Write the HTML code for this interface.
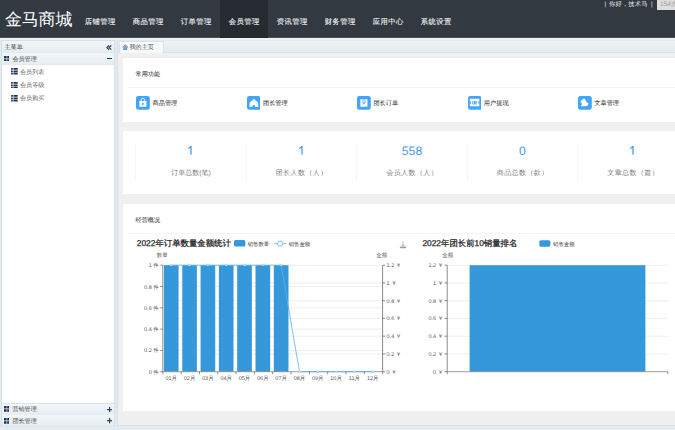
<!DOCTYPE html>
<html><head><meta charset="utf-8">
<style>
*{margin:0;padding:0;box-sizing:border-box}
html,body{width:675px;height:430px;overflow:hidden}
body{position:relative;background:#e4ecef;font-family:"Liberation Sans",sans-serif;color:#333;text-rendering:geometricPrecision}
.a{position:absolute;white-space:nowrap}
#hd{left:0;top:0;width:675px;height:38px;background:#323941;box-shadow:inset 0 -1px 0 #4a5058}
#logo{left:5px;top:7.2px;font-size:17px;line-height:26px;color:#fff;letter-spacing:-0.2px}
.mi{top:0;height:38px;width:48px;text-align:center;font-size:7.3px;line-height:43.5px;color:#f2f2f2;letter-spacing:0.45px;text-indent:0.45px;-webkit-text-stroke:0.12px #f2f2f2}
.mi.on{background:#262a31}
.tr{top:0;font-size:6.3px;line-height:10px;color:#eee;letter-spacing:0.15px}
#trbox{left:656.8px;top:0;width:19px;height:9.8px;background:#dedede;font-size:6.6px;line-height:9.6px;color:#9a9a9a;padding-left:3.2px;overflow:hidden}
/* sidebar */
#sb{left:1px;top:40px;width:114px;height:387px;background:#fff;border:1px solid #d4e0e6}
.sbh{left:0;width:112px;height:11.5px;background:linear-gradient(#f2f6f8,#e6edf0);border-bottom:1px solid #dfe8ec;font-size:6.1px;line-height:13.8px;color:#4a4a4a}
.sbi{left:0;width:112px;height:13.4px;font-size:6.1px;line-height:14.6px;color:#666;padding-left:18px}
.g4{position:absolute;left:1.7px;top:2.7px;width:5.8px;height:5.8px}
.li{position:absolute;left:9px;top:2.9px;width:6.8px;height:6.6px}
.dbl{left:104px;top:-1px;font-size:10px;font-weight:bold;color:#1f3557;line-height:11px}
.minus{left:104.7px;top:5px;width:5px;height:1.2px;background:#1f3557}
.plus{left:105px;top:0;font-size:8px;font-weight:bold;color:#1f3557;line-height:11px}
/* main */
#mp{left:117px;top:40px;width:560px;height:386px;background:#f0f0f0;border:1px solid #d4e0e6;border-top-color:#e3eaee}
#hl{left:0;top:38px;width:675px;height:2px;background:#edf2f4}
#tabbar{left:0;top:0;width:560px;height:12px;background:linear-gradient(#eef3f5,#e3ebee);border-bottom:1px solid #d6e1e6}
#tab{left:0.5px;top:-0.5px;width:45px;height:12px;background:linear-gradient(#fdfefe,#f4f8fa);border:1px solid #d9e3e8;border-bottom:none;font-size:6.1px;line-height:12px;color:#555;padding-left:10px}
.card{left:5px;width:570px;background:#fff}
.t65{font-size:6.1px;color:#222;line-height:8px}
.qi{width:14px;height:14px;border-radius:2.5px;background:#3d9ff5}
.ql{font-size:6.2px;line-height:15.6px;color:#222}
.num{font-size:12.2px;color:#4a9af2;text-align:center;width:110px}
.lab{font-size:7px;color:#808080;text-align:center;width:110px}
.cell{top:12.5px;width:0;height:37px;border-left:1px dotted #efefef}
svg text{font-family:"Liberation Sans",sans-serif;text-rendering:geometricPrecision}
.ax{font-size:5.5px;fill:#5a5a5a}
.tt{font-size:8.4px;font-weight:normal;fill:#222;stroke:#222;stroke-width:0.25px}
.lg{font-size:5.4px;fill:#484848}
</style></head><body>
<div id="hd" class="a">
  <div id="logo" class="a">金马商城</div>
  <div class="a mi" style="left:76px">店铺管理</div>
  <div class="a mi" style="left:124px">商品管理</div>
  <div class="a mi" style="left:172px">订单管理</div>
  <div class="a mi on" style="left:220px">会员管理</div>
  <div class="a mi" style="left:268px">资讯管理</div>
  <div class="a mi" style="left:316px">财务管理</div>
  <div class="a mi" style="left:364px">应用中心</div>
  <div class="a mi" style="left:412px">系统设置</div>
  <div class="a tr" style="left:604.5px">|</div><div class="a tr" style="left:609px">你好，技术马</div><div class="a tr" style="left:651px">|</div>
  <div id="trbox" class="a">154次</div>
</div>

<div id="hl" class="a"></div>
<div id="sb" class="a">
  <div class="a sbh" style="top:0;padding-left:2.5px">主菜单<svg class="a" style="left:104px;top:3.5px" width="6" height="5.2" viewBox="0 0 6 5.2"><path d="M2.9 0.5L0.9 2.6l2 2.1M5.2 0.5L3.2 2.6l2 2.1" fill="none" stroke="#1f3557" stroke-width="1.15"/></svg></div>
  <div class="a sbh" style="top:12px;padding-left:10.4px"><svg class="g4" viewBox="0 0 6 6"><path d="M0 0h2.7v2.7H0zM3.3 0H6v2.7H3.3zM0 3.3h2.7V6H0zM3.3 3.3H6V6H3.3z" fill="#1f3557"/></svg>会员管理<span class="a minus"></span></div>
  <div class="a sbi" style="top:24.5px"><svg class="li" viewBox="0 0 7 7"><path d="M0 0h1.8v1.9H0zM2.5 0H7v1.9H2.5zM0 2.55h1.8v1.9H0zM2.5 2.55H7v1.9H2.5zM0 5.1h1.8V7H0zM2.5 5.1H7V7H2.5z" fill="#1f3557"/></svg>会员列表</div>
  <div class="a sbi" style="top:37.9px"><svg class="li" viewBox="0 0 7 7"><path d="M0 0h1.8v1.9H0zM2.5 0H7v1.9H2.5zM0 2.55h1.8v1.9H0zM2.5 2.55H7v1.9H2.5zM0 5.1h1.8V7H0zM2.5 5.1H7V7H2.5z" fill="#1f3557"/></svg>会员等级</div>
  <div class="a sbi" style="top:51.2px"><svg class="li" viewBox="0 0 7 7"><path d="M0 0h1.8v1.9H0zM2.5 0H7v1.9H2.5zM0 2.55h1.8v1.9H0zM2.5 2.55H7v1.9H2.5zM0 5.1h1.8V7H0zM2.5 5.1H7V7H2.5z" fill="#1f3557"/></svg>会员购买</div>
  <div class="a sbh" style="top:362.4px;padding-left:10.4px;border-top:1px solid #d8e4e8;height:12.7px;line-height:12px"><svg class="g4" style="top:1.8px" viewBox="0 0 6 6"><path d="M0 0h2.7v2.7H0zM3.3 0H6v2.7H3.3zM0 3.3h2.7V6H0zM3.3 3.3H6V6H3.3z" fill="#1f3557"/></svg>营销管理<svg class="a" style="left:104.6px;top:2.3px" width="5.2" height="5.2" viewBox="0 0 5.2 5.2"><path d="M2.6 0v5.2M0 2.6h5.2" stroke="#34465f" stroke-width="1.3"/></svg></div>
  <div class="a sbh" style="top:374.1px;padding-left:10.4px"><svg class="g4" viewBox="0 0 6 6"><path d="M0 0h2.7v2.7H0zM3.3 0H6v2.7H3.3zM0 3.3h2.7V6H0zM3.3 3.3H6V6H3.3z" fill="#1f3557"/></svg>团长管理<svg class="a" style="left:104.6px;top:3.3px" width="5.2" height="5.2" viewBox="0 0 5.2 5.2"><path d="M2.6 0v5.2M0 2.6h5.2" stroke="#34465f" stroke-width="1.3"/></svg></div>
</div>

<div id="mp" class="a">
  <div id="tabbar" class="a"></div>
  <div id="tab" class="a"><svg class="a" style="left:2.6px;top:2px" width="6.5" height="6.2" viewBox="0 0 13 12.4"><path d="M6.5 0.5L0.5 6.2l1.3 1.2L6.5 3l4.7 4.4 1.3-1.2z" fill="#b9707c"/><path d="M2.5 7.3L6.5 3.6l4 3.7V12h-8z" fill="#5fa0e8"/></svg>我的主页</div>
  <!-- card 1 -->
  <div class="a card" style="top:17px;height:64px">
    <div class="a t65" style="left:12.6px;top:13px">常用功能</div>
    <div class="a" style="left:4px;top:29px;width:566px;height:1px;background:#f4f5f6"></div>
    <svg class="a" style="left:13.20px;top:38.3px" width="13.8" height="13.8" viewBox="0 0 14 14"><rect width="14" height="14" rx="2.3" fill="#41a5fb"/><path d="M5.2 5V4.2a1.8 1.8 0 0 1 3.6 0V5" fill="none" stroke="#fff" stroke-width="0.9"/><rect x="3.4" y="5" width="7.2" height="5.9" rx="0.4" fill="#fff"/><path d="M7 6.6v2.8M5.6 8h2.8" stroke="#41a5fb" stroke-width="0.9"/></svg><div class="a ql" style="left:29.50px;top:38.3px">商品管理</div>
    <svg class="a" style="left:123.65px;top:38.3px" width="13.8" height="13.8" viewBox="0 0 14 14"><rect width="14" height="14" rx="2.3" fill="#41a5fb"/><path d="M7 2.8l4.4 4v4.3H2.6V6.8z" fill="#fff"/><path d="M5.6 11.1a1.4 1.4 0 0 1 2.8 0z" fill="#41a5fb"/><circle cx="7" cy="10.3" r="1.2" fill="#41a5fb"/></svg><div class="a ql" style="left:139.95px;top:38.3px">团长管理</div>
    <svg class="a" style="left:234.10px;top:38.3px" width="13.8" height="13.8" viewBox="0 0 14 14"><rect width="14" height="14" rx="2.3" fill="#41a5fb"/><rect x="3.4" y="3.3" width="7.2" height="7.6" rx="0.3" fill="#fff"/><path d="M5.4 4.1h3.2M4.8 6.2h4.4M5.6 8.2l2.8-1.3" stroke="#41a5fb" stroke-width="0.9"/></svg><div class="a ql" style="left:250.40px;top:38.3px">团长订单</div>
    <svg class="a" style="left:344.55px;top:38.3px" width="13.8" height="13.8" viewBox="0 0 14 14"><rect width="14" height="14" rx="2.3" fill="#41a5fb"/><rect x="1.9" y="2.8" width="9.6" height="7.6" fill="#fff"/><path d="M1.9 5.4a1.3 1.3 0 0 1 0 2.6zM11.5 5.4a1.3 1.3 0 0 0 0 2.6z" fill="#41a5fb"/><path d="M4.3 5.1h4.9v3.4H4.3z" fill="#41a5fb"/><path d="M5.4 5.1v3.4M8.1 5.1v3.4" stroke="#fff" stroke-width="0.7"/></svg><div class="a ql" style="left:360.85px;top:38.3px">用户提现</div>
    <svg class="a" style="left:455.00px;top:38.3px" width="13.8" height="13.8" viewBox="0 0 14 14"><rect width="14" height="14" rx="2.3" fill="#41a5fb"/><path d="M2.7 5.6C2.7 4.7 3.4 4.2 4.2 4.2 4.5 3.3 5.2 2.7 6 2.7c0.9 0 1.6 0.7 1.7 1.6l0.5 1.3 2.4 1.9c0 1.4-1.3 2.8-3.2 2.8H2.9c0-0.9 0.5-1.5 1.2-1.7L3.6 7.4C3 7 2.7 6.3 2.7 5.6z" fill="#fff"/></svg><div class="a ql" style="left:471.30px;top:38.3px">文章管理</div>
  </div>
  <!-- card 2 -->
  <div class="a card" style="top:90px;height:63px">
    <div class="a cell" style="left:12.2px"></div>
    <div class="a cell" style="left:122.7px"></div>
    <div class="a cell" style="left:233.1px"></div>
    <div class="a cell" style="left:343.6px"></div>
    <div class="a cell" style="left:454px"></div>
    <svg class="a" style="left:calc(65.5px - 0.4px);top:14px" width="5" height="11" viewBox="0 0 5 11"><path d="M2.35 1h1.3v8.8h-1.3V2.7L0.3 4.2 0 3.2z" fill="#4a9af2"/></svg><div class="a lab" style="left:13px;top:37.5px">订单总数(笔)</div>
    <svg class="a" style="left:calc(176.1px - 0.4px);top:14px" width="5" height="11" viewBox="0 0 5 11"><path d="M2.35 1h1.3v8.8h-1.3V2.7L0.3 4.2 0 3.2z" fill="#4a9af2"/></svg><div class="a lab" style="left:123.5px;top:38px;letter-spacing:0.4px;text-indent:0.4px">团长人数（人）</div>
    <div class="a num" style="left:234px;top:13.4px">558</div><div class="a lab" style="left:234px;top:38px;letter-spacing:0.4px;text-indent:0.4px">会员人数（人）</div>
    <div class="a num" style="left:344.5px;top:13.4px">0</div><div class="a lab" style="left:344.5px;top:38px;letter-spacing:0.4px;text-indent:0.4px">商品总数（款）</div>
    <svg class="a" style="left:calc(507.5px - 0.4px);top:14px" width="5" height="11" viewBox="0 0 5 11"><path d="M2.35 1h1.3v8.8h-1.3V2.7L0.3 4.2 0 3.2z" fill="#4a9af2"/></svg><div class="a lab" style="left:455px;top:38px;letter-spacing:0.4px;text-indent:0.4px">文章总数（篇）</div>
  </div>
  <!-- card 3 -->
  <div class="a card" style="top:163px;height:207px">
    <div class="a t65" style="left:12.6px;top:13px">经营概况</div>
    <div class="a" style="left:4px;top:28.6px;width:566px;height:1px;background:#f4f5f6"></div>
  </div>
</div>
<!--CHART--><svg class="a" style="left:0;top:0" width="675" height="430" viewBox="0 0 675 430">
<line x1="162.8" y1="286.5" x2="382.6" y2="286.5" stroke="#e2e2e2" stroke-width="0.6"/>
<line x1="162.8" y1="307.8" x2="382.6" y2="307.8" stroke="#e2e2e2" stroke-width="0.6"/>
<line x1="162.8" y1="329.1" x2="382.6" y2="329.1" stroke="#e2e2e2" stroke-width="0.6"/>
<line x1="162.8" y1="350.4" x2="382.6" y2="350.4" stroke="#e2e2e2" stroke-width="0.6"/>
<line x1="162.8" y1="265.2" x2="382.6" y2="265.2" stroke="#e2e2e2" stroke-width="0.6"/>
<line x1="162.8" y1="282.95" x2="382.6" y2="282.95" stroke="#e2e2e2" stroke-width="0.6"/>
<line x1="162.8" y1="300.7" x2="382.6" y2="300.7" stroke="#e2e2e2" stroke-width="0.6"/>
<line x1="162.8" y1="318.45" x2="382.6" y2="318.45" stroke="#e2e2e2" stroke-width="0.6"/>
<line x1="162.8" y1="336.2" x2="382.6" y2="336.2" stroke="#e2e2e2" stroke-width="0.6"/>
<line x1="162.8" y1="353.95" x2="382.6" y2="353.95" stroke="#e2e2e2" stroke-width="0.6"/>
<rect x="163.93" y="265.2" width="14.65" height="106.5" fill="#3498db"/>
<rect x="182.25" y="265.2" width="14.65" height="106.5" fill="#3498db"/>
<rect x="200.57" y="265.2" width="14.65" height="106.5" fill="#3498db"/>
<rect x="218.88" y="265.2" width="14.65" height="106.5" fill="#3498db"/>
<rect x="237.2" y="265.2" width="14.65" height="106.5" fill="#3498db"/>
<rect x="255.51" y="265.2" width="14.65" height="106.5" fill="#3498db"/>
<rect x="273.83" y="265.2" width="14.65" height="106.5" fill="#3498db"/>
<line x1="162.8" y1="265.2" x2="162.8" y2="371.7" stroke="#666" stroke-width="0.75"/>
<line x1="382.6" y1="265.2" x2="382.6" y2="371.7" stroke="#666" stroke-width="0.75"/>
<line x1="162.8" y1="371.7" x2="382.6" y2="371.7" stroke="#8a8a8a" stroke-width="0.85"/>
<line x1="160.3" y1="371.7" x2="162.8" y2="371.7" stroke="#666" stroke-width="0.75"/>
<text x="158.8" y="373.7" text-anchor="end" class="ax">0 件</text>
<line x1="160.3" y1="350.4" x2="162.8" y2="350.4" stroke="#666" stroke-width="0.75"/>
<text x="158.8" y="352.4" text-anchor="end" class="ax">0.2 件</text>
<line x1="160.3" y1="329.1" x2="162.8" y2="329.1" stroke="#666" stroke-width="0.75"/>
<text x="158.8" y="331.1" text-anchor="end" class="ax">0.4 件</text>
<line x1="160.3" y1="307.8" x2="162.8" y2="307.8" stroke="#666" stroke-width="0.75"/>
<text x="158.8" y="309.8" text-anchor="end" class="ax">0.6 件</text>
<line x1="160.3" y1="286.5" x2="162.8" y2="286.5" stroke="#666" stroke-width="0.75"/>
<text x="158.8" y="288.5" text-anchor="end" class="ax">0.8 件</text>
<line x1="160.3" y1="265.2" x2="162.8" y2="265.2" stroke="#666" stroke-width="0.75"/>
<text x="158.8" y="267.2" text-anchor="end" class="ax">1 件</text>
<line x1="382.6" y1="371.7" x2="385.1" y2="371.7" stroke="#666" stroke-width="0.75"/>
<text x="386.6" y="373.7" class="ax">0 ￥</text>
<line x1="382.6" y1="353.95" x2="385.1" y2="353.95" stroke="#666" stroke-width="0.75"/>
<text x="386.6" y="355.95" class="ax">0.2 ￥</text>
<line x1="382.6" y1="336.2" x2="385.1" y2="336.2" stroke="#666" stroke-width="0.75"/>
<text x="386.6" y="338.2" class="ax">0.4 ￥</text>
<line x1="382.6" y1="318.45" x2="385.1" y2="318.45" stroke="#666" stroke-width="0.75"/>
<text x="386.6" y="320.45" class="ax">0.6 ￥</text>
<line x1="382.6" y1="300.7" x2="385.1" y2="300.7" stroke="#666" stroke-width="0.75"/>
<text x="386.6" y="302.7" class="ax">0.8 ￥</text>
<line x1="382.6" y1="282.95" x2="385.1" y2="282.95" stroke="#666" stroke-width="0.75"/>
<text x="386.6" y="284.95" class="ax">1 ￥</text>
<line x1="382.6" y1="265.2" x2="385.1" y2="265.2" stroke="#666" stroke-width="0.75"/>
<text x="386.6" y="267.2" class="ax">1.2 ￥</text>
<line x1="162.8" y1="371.7" x2="162.8" y2="374.2" stroke="#666" stroke-width="0.75"/>
<line x1="181.12" y1="371.7" x2="181.12" y2="374.2" stroke="#666" stroke-width="0.75"/>
<line x1="199.43" y1="371.7" x2="199.43" y2="374.2" stroke="#666" stroke-width="0.75"/>
<line x1="217.75" y1="371.7" x2="217.75" y2="374.2" stroke="#666" stroke-width="0.75"/>
<line x1="236.07" y1="371.7" x2="236.07" y2="374.2" stroke="#666" stroke-width="0.75"/>
<line x1="254.38" y1="371.7" x2="254.38" y2="374.2" stroke="#666" stroke-width="0.75"/>
<line x1="272.7" y1="371.7" x2="272.7" y2="374.2" stroke="#666" stroke-width="0.75"/>
<line x1="291.02" y1="371.7" x2="291.02" y2="374.2" stroke="#666" stroke-width="0.75"/>
<line x1="309.33" y1="371.7" x2="309.33" y2="374.2" stroke="#666" stroke-width="0.75"/>
<line x1="327.65" y1="371.7" x2="327.65" y2="374.2" stroke="#666" stroke-width="0.75"/>
<line x1="345.97" y1="371.7" x2="345.97" y2="374.2" stroke="#666" stroke-width="0.75"/>
<line x1="364.28" y1="371.7" x2="364.28" y2="374.2" stroke="#666" stroke-width="0.75"/>
<line x1="382.6" y1="371.7" x2="382.6" y2="374.2" stroke="#666" stroke-width="0.75"/>
<text x="171.26" y="379.5" text-anchor="middle" class="ax">01月</text>
<text x="189.58" y="379.5" text-anchor="middle" class="ax">02月</text>
<text x="207.89" y="379.5" text-anchor="middle" class="ax">03月</text>
<text x="226.21" y="379.5" text-anchor="middle" class="ax">04月</text>
<text x="244.53" y="379.5" text-anchor="middle" class="ax">05月</text>
<text x="262.84" y="379.5" text-anchor="middle" class="ax">06月</text>
<text x="281.16" y="379.5" text-anchor="middle" class="ax">07月</text>
<text x="299.48" y="379.5" text-anchor="middle" class="ax">08月</text>
<text x="317.79" y="379.5" text-anchor="middle" class="ax">09月</text>
<text x="336.11" y="379.5" text-anchor="middle" class="ax">10月</text>
<text x="354.43" y="379.5" text-anchor="middle" class="ax">11月</text>
<text x="372.74" y="379.5" text-anchor="middle" class="ax">12月</text>
<polyline points="171.26,265.2 189.58,265.2 207.89,265.2 226.21,265.2 244.53,265.2 262.84,265.2 281.16,265.2 299.48,371.7 317.79,371.7 336.11,371.7 354.43,371.7 372.74,371.7" fill="none" stroke="#5ab1ef" stroke-width="0.8"/>
<circle cx="171.26" cy="265.2" r="0.9" fill="#fff" stroke="#5ab1ef" stroke-width="0.45"/>
<circle cx="189.58" cy="265.2" r="0.9" fill="#fff" stroke="#5ab1ef" stroke-width="0.45"/>
<circle cx="207.89" cy="265.2" r="0.9" fill="#fff" stroke="#5ab1ef" stroke-width="0.45"/>
<circle cx="226.21" cy="265.2" r="0.9" fill="#fff" stroke="#5ab1ef" stroke-width="0.45"/>
<circle cx="244.53" cy="265.2" r="0.9" fill="#fff" stroke="#5ab1ef" stroke-width="0.45"/>
<circle cx="262.84" cy="265.2" r="0.9" fill="#fff" stroke="#5ab1ef" stroke-width="0.45"/>
<circle cx="281.16" cy="265.2" r="0.9" fill="#fff" stroke="#5ab1ef" stroke-width="0.45"/>
<circle cx="299.48" cy="371.7" r="0.9" fill="#fff" stroke="#5ab1ef" stroke-width="0.45"/>
<circle cx="317.79" cy="371.7" r="0.9" fill="#fff" stroke="#5ab1ef" stroke-width="0.45"/>
<circle cx="336.11" cy="371.7" r="0.9" fill="#fff" stroke="#5ab1ef" stroke-width="0.45"/>
<circle cx="354.43" cy="371.7" r="0.9" fill="#fff" stroke="#5ab1ef" stroke-width="0.45"/>
<circle cx="372.74" cy="371.7" r="0.9" fill="#fff" stroke="#5ab1ef" stroke-width="0.45"/>
<text x="136.8" y="246.2" class="tt">2022年订单数量金额统计</text>
<rect x="234" y="240.1" width="11.4" height="6.5" rx="1.6" fill="#3498db"/>
<text x="247.7" y="245.5" class="lg">销售数量</text>
<line x1="274.5" y1="243.6" x2="286" y2="243.6" stroke="#5ab1ef" stroke-width="0.8"/>
<circle cx="280.1" cy="243.6" r="2.6" fill="#fff" stroke="#5ab1ef" stroke-width="0.8"/>
<text x="288.7" y="245.5" class="lg">销售金额</text>
<text x="162.2" y="256.6" text-anchor="middle" class="ax">数量</text>
<text x="381.7" y="256.6" text-anchor="middle" class="ax">金额</text>
<path d="M403 241.3v5M401 244.6l2 2 2-2M400.3 246.3v1.6h5.4v-1.6" fill="none" stroke="#888" stroke-width="0.6"/><path d="M400.3 247.3h5.4" stroke="#888" stroke-width="1"/>
<line x1="447.2" y1="265.2" x2="667.8" y2="265.2" stroke="#e2e2e2" stroke-width="0.6"/>
<line x1="447.2" y1="282.95" x2="667.8" y2="282.95" stroke="#e2e2e2" stroke-width="0.6"/>
<line x1="447.2" y1="300.7" x2="667.8" y2="300.7" stroke="#e2e2e2" stroke-width="0.6"/>
<line x1="447.2" y1="318.45" x2="667.8" y2="318.45" stroke="#e2e2e2" stroke-width="0.6"/>
<line x1="447.2" y1="336.2" x2="667.8" y2="336.2" stroke="#e2e2e2" stroke-width="0.6"/>
<line x1="447.2" y1="353.95" x2="667.8" y2="353.95" stroke="#e2e2e2" stroke-width="0.6"/>
<rect x="469.6" y="265.2" width="175.8" height="106.5" fill="#3498db"/>
<line x1="447.2" y1="265.2" x2="447.2" y2="371.7" stroke="#666" stroke-width="0.75"/>
<line x1="447.2" y1="371.7" x2="667.8" y2="371.7" stroke="#8a8a8a" stroke-width="0.85"/>
<line x1="667.8" y1="371.7" x2="667.8" y2="374.2" stroke="#666" stroke-width="0.75"/>
<line x1="447.2" y1="371.7" x2="447.2" y2="374.2" stroke="#666" stroke-width="0.75"/>
<line x1="444.7" y1="371.7" x2="447.2" y2="371.7" stroke="#666" stroke-width="0.75"/>
<text x="443.2" y="373.7" text-anchor="end" class="ax">0 ￥</text>
<line x1="444.7" y1="353.95" x2="447.2" y2="353.95" stroke="#666" stroke-width="0.75"/>
<text x="443.2" y="355.95" text-anchor="end" class="ax">0.2 ￥</text>
<line x1="444.7" y1="336.2" x2="447.2" y2="336.2" stroke="#666" stroke-width="0.75"/>
<text x="443.2" y="338.2" text-anchor="end" class="ax">0.4 ￥</text>
<line x1="444.7" y1="318.45" x2="447.2" y2="318.45" stroke="#666" stroke-width="0.75"/>
<text x="443.2" y="320.45" text-anchor="end" class="ax">0.6 ￥</text>
<line x1="444.7" y1="300.7" x2="447.2" y2="300.7" stroke="#666" stroke-width="0.75"/>
<text x="443.2" y="302.7" text-anchor="end" class="ax">0.8 ￥</text>
<line x1="444.7" y1="282.95" x2="447.2" y2="282.95" stroke="#666" stroke-width="0.75"/>
<text x="443.2" y="284.95" text-anchor="end" class="ax">1 ￥</text>
<line x1="444.7" y1="265.2" x2="447.2" y2="265.2" stroke="#666" stroke-width="0.75"/>
<text x="443.2" y="267.2" text-anchor="end" class="ax">1.2 ￥</text>
<text x="422.4" y="246.2" class="tt">2022年团长前10销量排名</text>
<rect x="539.3" y="240.2" width="11.1" height="6.5" rx="1.6" fill="#3498db"/>
<text x="553" y="245.5" class="lg">销售金额</text>
<text x="447.8" y="256.6" text-anchor="middle" class="ax">金额</text>
</svg>
<!--/CHART-->
</body></html>
